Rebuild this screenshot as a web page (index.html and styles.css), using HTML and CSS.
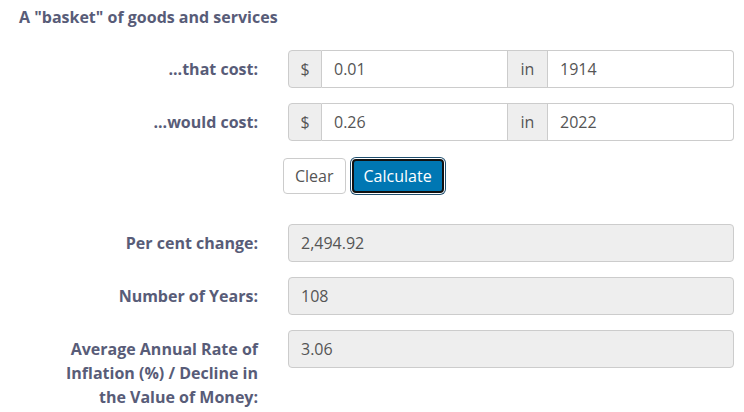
FILE: index.html
```html
<!DOCTYPE html>
<html>
<head>
<meta charset="utf-8">
<link rel="stylesheet" href="styles.css">
</head>
<body>
<div class="page">
  <h2 class="title">A "basket" of goods and services</h2>
  <div class="form">
    <div class="row">
      <label class="lbl">...that cost:</label>
      <div class="group">
        <span class="addon">$</span>
        <span class="field">0.01</span>
        <span class="addon">in</span>
        <span class="field">1914</span>
      </div>
    </div>
    <div class="row">
      <label class="lbl">...would cost:</label>
      <div class="group">
        <span class="addon">$</span>
        <span class="field">0.26</span>
        <span class="addon">in</span>
        <span class="field">2022</span>
      </div>
    </div>
    <div class="row buttons">
      <div></div>
      <div class="btns">
        <button class="btn btn-clear">Clear</button>
        <button class="btn btn-calc">Calculate</button>
      </div>
    </div>
    <div class="row out-first">
      <label class="lbl">Per cent change:</label>
      <div class="readonly">2,494.92</div>
    </div>
    <div class="row">
      <label class="lbl">Number of Years:</label>
      <div class="readonly">108</div>
    </div>
    <div class="row">
      <label class="lbl">Average Annual Rate of Inflation (%) / Decline in the Value of Money:</label>
      <div class="readonly">3.06</div>
    </div>
  </div>
</div>
</body>
</html>
```
FILE: styles.css
```css
* { box-sizing: border-box; }
html, body { margin: 0; padding: 0; background: #fff; }
body {
  font-family: "Open Sans", "Liberation Sans", sans-serif;
  font-size: 16px;
  line-height: 1.5;
  color: #555;
}
.page { padding: 6px 10px 0 19px; }
.title {
  margin: 0;
  font-size: 16px;
  font-weight: 700;
  line-height: 22px;
  color: #585c78;
}
.form { margin-top: 22px; }
.row {
  display: grid;
  grid-template-columns: 239px 1fr;
  column-gap: 30px;
  margin-bottom: 15px;
}
.lbl {
  justify-self: end;
  width: 208px;
  text-align: right;
  font-weight: 700;
  font-size: 16px;
  line-height: 24px;
  padding-top: 7px;
  color: #585c78;
}
.group {
  display: flex;
  height: 38px;
}
.addon, .field {
  border: 1px solid #ccc;
  padding: 6px 12px;
  line-height: 24px;
  font-size: 16px;
}
.addon {
  background: #eee;
  color: #555;
  flex: none;
}
.addon:first-child { border-radius: 4px 0 0 4px; width: 34px; text-align: center; padding: 6px 0; }
.addon:nth-child(3) { width: 41px; text-align: center; padding: 6px 0; margin-left: -1px; }
.field {
  background: #fff;
  color: #555;
  flex: 1;
  border-left: none;
}
.field:nth-child(2) { flex: 0 0 186px; border-right: none; }
.field:last-child { border-radius: 0 4px 4px 0; border-left: none; }
.buttons { margin-top: 17px; margin-bottom: 30px; }
.btns { display: flex; gap: 6px; align-items: center; margin-left: -5px; }
.btn {
  font-family: inherit;
  font-size: 16px;
  line-height: 24px;
  height: 36px;
  border-radius: 4px;
  padding: 0 11px;
  cursor: pointer;
}
.btn-clear {
  background: #fff;
  border: 1px solid #ccc;
  color: #555;
}
.btn-calc {
  background: #0077b3;
  color: #fff;
  border: 2px solid #111;
  height: 34px;
  padding: 0 10px;
  box-shadow: 0 0 0 1px #fff, 0 0 0 2px #1f4e6e;
}
.readonly {
  height: 38px;
  background: #eee;
  border: 1px solid #ccc;
  border-radius: 4px;
  padding: 6px 12px;
  color: #555;
}
```
